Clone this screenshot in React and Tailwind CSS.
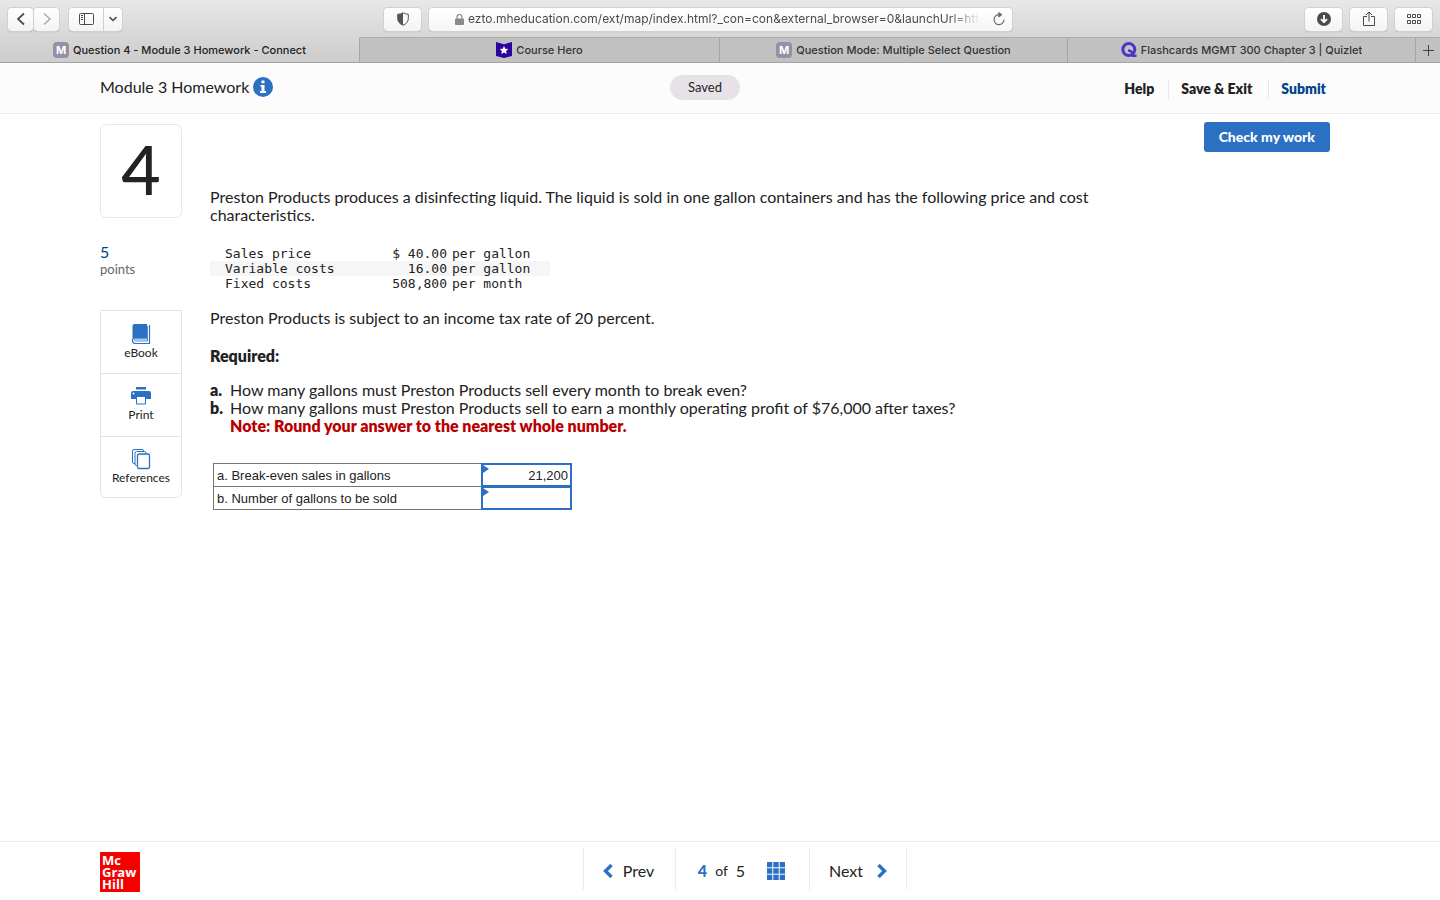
import React, { useState } from 'react';

const TABS = [
  { id: 'connect', title: 'Question 4 - Module 3 Homework - Connect', icon: MTabIcon, active: true, width: 'flex-[360_1_0%]' },
  { id: 'hero', title: 'Course Hero', icon: HeroTabIcon, width: 'flex-[360_1_0%]' },
  { id: 'mode', title: 'Question Mode: Multiple Select Question', icon: MTabIcon, width: 'flex-[348_1_0%]' },
  { id: 'quizlet', title: 'Flashcards MGMT 300 Chapter 3 | Quizlet', icon: QuizletTabIcon, width: 'flex-[348_1_0%]' },
];

const COSTS = [
  { label: 'Sales price', value: '$ 40.00', unit: 'per gallon' },
  { label: 'Variable costs', value: '16.00', unit: 'per gallon' },
  { label: 'Fixed costs', value: '508,800', unit: 'per month' },
];

const TOOLS = [
  { label: 'eBook', icon: BookIcon },
  { label: 'Print', icon: PrintIcon },
  { label: 'References', icon: ReferencesIcon },
];

function MTabIcon() {
  return (
    <span className="flex h-4 w-4 shrink-0 items-center justify-center rounded-[4px] bg-[#9390a8] text-[11px] font-bold text-white">M</span>
  );
}

function HeroTabIcon() {
  return (
    <svg width="16" height="16" viewBox="0 0 16 16" className="shrink-0">
      <path d="M0 0l8 2.200L16 0v14L8 16l-8-2z" fill="#2b04a0" />
      <path d="M8 3.900l1.300 2.800 3 .3-2.200 2 .6 3L8 10.400 5.300 12l.6-3-2.200-2 3-.3z" fill="#fff" />
    </svg>
  );
}

function QuizletTabIcon() {
  return (
    <svg width="16" height="16" viewBox="0 0 16 16" className="shrink-0" fill="none" stroke="#4a35c8" strokeWidth="3">
      <circle cx="7.800" cy="7.500" r="6" />
      <path d="M7 8.500c2.500 0 4.500 1.500 5 5.200h3.500" strokeWidth="2.600" />
    </svg>
  );
}

function BookIcon() {
  return (
    <svg width="20" height="22" viewBox="0 0 20 22">
      <path d="M3.500 1H16v14.500H4q-1.500 0-2.500 1.500V3q0-2 2-2z" fill="#2b70c3" />
      <path d="M16.500 3v15h-12q-1-.2-1-1t1-1h12" fill="none" stroke="#2b70c3" strokeWidth=".8" />
      <path d="M18.500 2v18.500H4Q1.500 20.300 1.500 17.500V16" fill="none" stroke="#2b70c3" strokeWidth="1.200" />
    </svg>
  );
}

function PrintIcon() {
  return (
    <svg width="20" height="22" viewBox="0 0 20 22">
      <path d="M5 2h10v2.500H5z" fill="#2b70c3" />
      <path d="M2 6h16q2 0 2 2v6h-5v-2H5v2H0V8q0-2 2-2z" fill="#2b70c3" />
      <path d="M5.500 11.500h9v7.500h-9z" fill="#fff" stroke="#2b70c3" />
      <circle cx="2.500" cy="8.500" r="1" fill="#fff" />
    </svg>
  );
}

function ReferencesIcon() {
  return (
    <svg width="20" height="22" viewBox="0 0 20 22" fill="#fff" stroke="#2b70c3">
      <rect x="1.500" y="1.500" width="11" height="14" rx="1.500" />
      <rect x="4" y="3.500" width="11" height="14" rx="1.500" />
      <rect x="6.500" y="6" width="12" height="14.500" rx="1.500" strokeWidth="1.300" />
    </svg>
  );
}

function ToolbarButton({ label, className = '', children }) {
  return (
    <button
      type="button"
      aria-label={label}
      className={`flex h-[23px] items-center justify-center rounded-[4px] bg-gradient-to-b from-white to-[#f3f3f3] text-[#4b4b4b] shadow-[0_0_0_1px_#d0d0d0,0_1px_1px_#999] ${className}`}
    >
      {children}
    </button>
  );
}

function BrowserToolbar() {
  return (
    <div className="flex h-[37px] items-center bg-gradient-to-b from-[#e8e8e8] to-[#d6d6d6] px-2 pt-px">
      <div className="flex flex-1 items-center">
        <ToolbarButton label="Back" className="w-[25px]">
          <svg width="10" height="14" viewBox="0 0 10 14" fill="none" stroke="currentColor" strokeWidth="1.700"><path d="M8 1.500L2 7l6 5.500" /></svg>
        </ToolbarButton>
        <ToolbarButton label="Forward" className="ml-px w-[25px]">
          <svg width="10" height="14" viewBox="0 0 10 14" fill="none" stroke="#aaa" strokeWidth="1.500"><path d="M2 1.500L8 7l-6 5.500" /></svg>
        </ToolbarButton>
        <ToolbarButton label="Sidebar" className="ml-[10px] w-[34px] rounded-r-none">
          <svg width="15" height="12" viewBox="0 0 15 12" fill="none" stroke="currentColor">
            <rect x=".5" y=".5" width="14" height="11" rx="1" />
            <path d="M5.500.5v11M2 2.500h2M2 4.500h2M2 6.500h2" />
          </svg>
        </ToolbarButton>
        <ToolbarButton label="Sidebar menu" className="ml-px w-[18px] rounded-l-none">
          <svg width="8" height="6" viewBox="0 0 8 6" fill="none" stroke="currentColor" strokeWidth="1.600"><path d="M.5 1.200L4 4.500l3.500-3.300" /></svg>
        </ToolbarButton>
      </div>
      <ToolbarButton label="Privacy report" className="w-[37px]">
        <svg width="12" height="14" viewBox="0 0 12 14">
          <path d="M6 .8q2.500 1.500 5.300 1.500v4.200Q11.300 11 6 13.300.7 11 .7 6.500V2.300Q3.500 2.300 6 .8z" fill="none" stroke="#555" />
          <path d="M6 .8v12.500Q.7 11 .7 6.500V2.300Q3.500 2.300 6 .8z" fill="#555" />
        </svg>
      </ToolbarButton>
      <div className="mr-11 ml-2 flex h-[23px] w-[583px] items-center rounded-[4px] bg-gradient-to-b from-white to-[#f6f6f6] pr-[6px] pl-[26px] shadow-[0_0_0_1px_#d0d0d0,0_1px_1px_#999]">
        <svg width="9" height="11" viewBox="0 0 9 11" className="shrink-0">
          <rect x="0" y="4.500" width="9" height="6.500" rx="1" fill="#8a8a8a" />
          <path d="M2 5V3a2.500 2.500 0 0 1 5 0v2" fill="none" stroke="#8a8a8a" strokeWidth="1.200" />
        </svg>
        <input
          aria-label="Address"
          readOnly
          value="ezto.mheducation.com/ext/map/index.html?_con=con&external_browser=0&launchUrl=https"
          className="ml-[4px] min-w-0 flex-1 bg-transparent font-['Inter','Noto_Sans',sans-serif] text-xs text-[#4b4b4b] outline-none [mask-image:linear-gradient(to_right,#000_94%,transparent)]"
        />
        <button type="button" aria-label="Reload" className="ml-3 shrink-0">
          <svg width="14" height="15" viewBox="0 0 14 15" fill="none" stroke="#666" strokeWidth="1.100">
            <path d="M8 2.700A5 5 0 1 0 12 7.500" />
            <path d="M6.500.5L9.500 2.700 6.500 5" fill="#666" />
          </svg>
        </button>
      </div>
      <div className="flex flex-1 items-center justify-end gap-2">
        <ToolbarButton label="Downloads" className="w-[37px]">
          <svg width="14" height="14" viewBox="0 0 14 14"><circle cx="7" cy="7" r="7" fill="#4b4b4b" /><path d="M7 3v7M4 7.200l3 3 3-3" fill="none" stroke="#fff" strokeWidth="1.800" /></svg>
        </ToolbarButton>
        <ToolbarButton label="Share" className="w-[37px]">
          <svg width="12" height="16" viewBox="0 0 12 16" fill="none" stroke="currentColor"><path d="M4 5.500H.5v9h11v-9H8M6 10.500V1M3 4l3-3 3 3" /></svg>
        </ToolbarButton>
        <ToolbarButton label="Tab overview" className="w-[37px]">
          <svg width="14" height="11" viewBox="0 0 14 11" fill="none" stroke="currentColor">
            <path d="M.5.5h3v3h-3zM5.500.5h3v3h-3zM10.500.5h3v3h-3zM.5 6.500h3v3h-3zM5.500 6.500h3v3h-3zM10.500 6.500h3v3h-3z" />
          </svg>
        </ToolbarButton>
      </div>
    </div>
  );
}

function TabBar() {
  return (
    <div className="flex h-[26px] border-b border-[#a3a3a3] bg-[#c1c1c1] text-[11px] text-[#333]">
      {TABS.map((tab) => (
        <button
          key={tab.id}
          type="button"
          className={`flex min-w-0 items-center justify-center gap-1 border-t border-r border-r-[#a6a6a6] font-medium ${tab.width} ${
            tab.active ? 'border-t-[#d6d6d6] bg-gradient-to-b from-[#d6d6d6] to-[#cdcdcd] text-[#222]' : 'border-t-[#adadad]'
          }`}
        >
          <tab.icon />
          <span className="truncate">{tab.title}</span>
        </button>
      ))}
      <button type="button" aria-label="New tab" className="flex w-6 items-center justify-center border-t border-[#adadad]">
        <svg width="11" height="11" viewBox="0 0 11 11" stroke="#444"><path d="M5.500 0v11M0 5.500h11" /></svg>
      </button>
    </div>
  );
}

function AssignmentHeader() {
  return (
    <header className="grid h-[51px] shrink-0 grid-cols-[1fr_auto_1fr] items-center border-b border-[#ededed] bg-[#fcfcfc] pr-[114px] pb-[2px] pl-[100px]">
      <div className="flex items-center gap-1">
        <h1 className="text-base leading-5">Module 3 Homework</h1>
        <button type="button" aria-label="Assignment information">
          <svg width="20" height="20" viewBox="0 0 20 20">
            <circle cx="10" cy="10" r="10" fill="#2b70c3" />
            <path d="M8.500 3.500h3v2.700h-3zM7.500 8h4v6H13v2H7v-2h1.500v-4.200h-1z" fill="#fff" />
          </svg>
        </button>
      </div>
      <span className="mr-4 rounded-full bg-[#e7e2e7] px-[18px] py-1 text-[13px] leading-[17px]">Saved</span>
      <nav className="flex items-center justify-end pt-1 text-sm leading-5 font-extrabold">
        <button type="button" className="pr-[14px]">Help</button>
        <button type="button" className="border-l border-[#e8e8e8] pr-4 pl-3">Save &amp; Exit</button>
        <button type="button" className="border-l border-[#e8e8e8] pl-3 text-[#00438a]">Submit</button>
      </nav>
    </header>
  );
}

function QuestionSidebar() {
  return (
    <aside className="w-[82px] shrink-0 pt-[10px]">
      <div className="flex h-[94px] items-center justify-center rounded-md border border-[#e8e8e8] pb-1 text-[68px] leading-none font-medium text-[#222]">4</div>
      <p className="mt-[25px] text-base leading-[18px] text-[#00438a]">5</p>
      <p className="text-[13px] leading-4 text-[#666]">points</p>
      <div className="mt-[33px] overflow-hidden rounded-b-md border border-[#e4e4e4]">
        {TOOLS.map((tool) => (
          <button
            key={tool.label}
            type="button"
            className="flex h-[63px] w-full flex-col items-center border-t border-[#e4e4e4] pt-[11px] text-xs leading-4 first:h-[62px] first:border-t-0 first:pt-3 last:h-[61px]"
          >
            <tool.icon />
            {tool.label}
          </button>
        ))}
      </div>
    </aside>
  );
}

function AnswerRow({ id, label, value, onChange }) {
  return (
    <tr>
      <th scope="row" className="h-[23px] w-[268px] border border-[#767676] px-[3px] pt-px text-left font-normal">
        <label htmlFor={id}>{label}</label>
      </th>
      <td className="relative h-[23px] w-[90px] border border-[#767676] p-0">
        <input
          id={id}
          value={value}
          onChange={(e) => onChange(e.target.value)}
          className="block h-[22px] w-full px-[3px] text-right outline-2 -outline-offset-1 outline-[#2b70c3]"
        />
        <span className="absolute top-px left-px border-y-4 border-l-[6px] border-y-transparent border-l-[#2b70c3]" />
      </td>
    </tr>
  );
}

function Question() {
  const [answers, setAnswers] = useState({ a: '21,200', b: '' });
  const setAnswer = (key) => (value) => setAnswers((prev) => ({ ...prev, [key]: value }));

  return (
    <div className="min-w-0 flex-1 pt-2">
      <div className="flex justify-end">
        <button type="button" className="h-[30px] rounded-[3px] bg-[#2b70c3] px-[15px] pb-px text-sm font-black text-white">
          Check my work
        </button>
      </div>
      <div className="mt-9 max-w-[900px] text-base leading-[18px]">
        <p>
          Preston Products produces a disinfecting liquid. The liquid is sold in one gallon containers and has the following price and cost characteristics.
        </p>
        <table className="mt-[22px] w-[340px] font-['DejaVu_Sans_Mono',monospace] text-[13px] leading-[15px]">
          <tbody>
            {COSTS.map((row) => (
              <tr key={row.label} className="even:bg-[#f6f6f6]">
                <th scope="row" className="p-0 pl-[15px] text-left font-normal">{row.label}</th>
                <td className="w-[80px] p-0 text-right">{row.value}</td>
                <td className="w-[103px] p-0 pl-[5px]">{row.unit}</td>
              </tr>
            ))}
          </tbody>
        </table>
        <p className="mt-[18px]">Preston Products is subject to an income tax rate of 20 percent.</p>
        <p className="mt-5 font-extrabold">Required:</p>
        <ol className="mt-4">
          <li className="flex">
            <span className="w-5 shrink-0 font-extrabold">a.</span>
            <span>How many gallons must Preston Products sell every month to break even?</span>
          </li>
          <li className="flex">
            <span className="w-5 shrink-0 font-extrabold">b.</span>
            <span>
              How many gallons must Preston Products sell to earn a monthly operating profit of $76,000 after taxes?
              <strong className="block font-extrabold text-[#b90000]">Note: Round your answer to the nearest whole number.</strong>
            </span>
          </li>
        </ol>
        <table className="mt-7 ml-[3px] border-collapse font-['Liberation_Sans',Arial,sans-serif] text-[13px] leading-4">
          <tbody>
            <AnswerRow id="answer-a" label="a. Break-even sales in gallons" value={answers.a} onChange={setAnswer('a')} />
            <AnswerRow id="answer-b" label="b. Number of gallons to be sold" value={answers.b} onChange={setAnswer('b')} />
          </tbody>
        </table>
      </div>
    </div>
  );
}

function AssignmentFooter() {
  return (
    <footer className="grid h-[59px] shrink-0 grid-cols-[1fr_auto_1fr] items-center border-t border-[#ededed] pr-[50px] pl-[100px]">
      <p className="mt-px h-10 w-10 bg-[#f50000] pt-[2px] pl-[2px] font-['Open_Sans',sans-serif] text-[13px] leading-3 font-bold text-white">
        Mc Graw Hill
      </p>
      <nav className="mb-1 flex h-[42px] items-stretch border-x border-[#ededed] text-base">
        <button type="button" className="flex w-[92px] items-center justify-center gap-[10px] border-r border-[#ededed] pt-1 pr-[2px]">
          <svg width="10" height="14" viewBox="0 0 10 14" fill="none" stroke="#2b70c3" strokeWidth="3.400"><path d="M8.500 1L2.500 7l6 6" /></svg>
          Prev
        </button>
        <div className="flex w-[134px] items-center justify-center border-r border-[#ededed] pt-1 pr-[2px]">
          <span className="font-black text-[#2b70c3]">4</span>
          <span className="mx-2 text-sm">of</span>
          <span>5</span>
          <button type="button" aria-label="Question list" className="ml-[22px]">
            <svg width="18" height="18" viewBox="0 0 18 18" fill="#2b70c3">
              <path d="M0 0h5.300v5.300H0zM6.300 0h5.400v5.300H6.300zM12.700 0H18v5.300h-5.300zM0 6.300h5.300v5.400H0zM6.300 6.300h5.400v5.400H6.300zM12.700 6.300H18v5.400h-5.300zM0 12.700h5.300V18H0zM6.300 12.700h5.400V18H6.300zM12.700 12.700H18V18h-5.300z" />
            </svg>
          </button>
        </div>
        <button type="button" className="flex w-[96px] items-center justify-center gap-[14px] pt-1">
          Next
          <svg width="10" height="14" viewBox="0 0 10 14" fill="none" stroke="#2b70c3" strokeWidth="3.400"><path d="M1.500 1l6 6-6 6" /></svg>
        </button>
      </nav>
    </footer>
  );
}

export default function App() {
  return (
    <div className="flex min-h-screen flex-col bg-white font-['Lato','Open_Sans',sans-serif] text-[#222]">
      <div className="shrink-0 font-['Inter','Noto_Sans',sans-serif]">
        <BrowserToolbar />
        <TabBar />
      </div>
      <AssignmentHeader />
      <main className="flex flex-1 items-start gap-7 pr-[110px] pl-[100px]">
        <QuestionSidebar />
        <Question />
      </main>
      <AssignmentFooter />
    </div>
  );
}
